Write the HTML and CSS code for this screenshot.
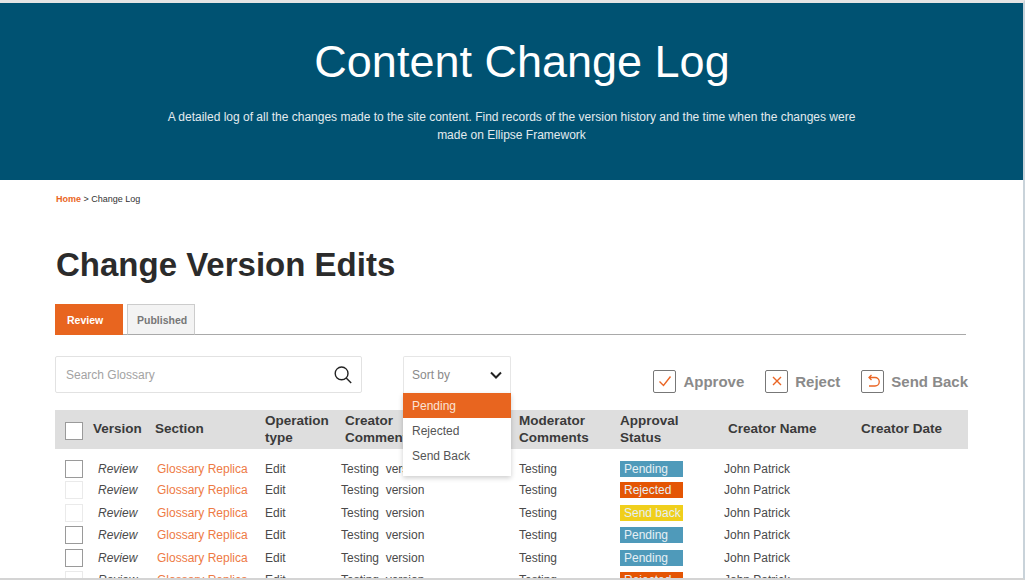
FILE: index.html
```html
<!DOCTYPE html>
<html lang="en">
<head>
    <meta charset="UTF-8">
    <meta name="viewport" content="width=device-width, initial-scale=1.0">
    <title>Content Change Log</title>
    <link rel="stylesheet" href="styles.css">
</head>
<body>
    <div class="page">
        <!-- Banner -->
        <header class="banner">
            <h1>Content Change Log</h1>
            <p>A detailed log of all the changes made to the site content. Find records of the version history and the time when the changes were made on Ellipse Framework</p>
        </header>

        <div class="container">
            <p class="crumbs"><a href="#">Home</a> &gt; Change Log</p>
            <h2>Change Version Edits</h2>

            <div class="tabs">
                <a class="tab active" href="#">Review</a>
                <a class="tab" href="#">Published</a>
            </div>

            <!-- Search, sort and bulk actions -->
            <div class="toolbar">
                <div class="search">
                    <span>Search Glossary</span>
                    <svg width="20" height="20" viewBox="0 0 20 20" fill="none" stroke="#222" stroke-width="1.4"><circle cx="8.6" cy="8.4" r="6.4"/><path d="M13.2 13l5 5"/></svg>
                </div>
                <div class="sort">
                    <div class="sort-head">
                        <span>Sort by</span>
                        <svg width="12" height="8" viewBox="0 0 12 8" fill="none" stroke="#222" stroke-width="2"><path d="M1 1.5l5 5 5-5"/></svg>
                    </div>
                    <ul class="sort-menu">
                        <li class="selected">Pending</li>
                        <li>Rejected</li>
                        <li>Send Back</li>
                    </ul>
                </div>
                <div class="actions">
                    <a class="action" href="#">
                        <span class="action-box"><svg width="14" height="12" viewBox="0 0 14 12" fill="none" stroke="#ea6524" stroke-width="1.4"><path d="M1.5 6.5l4 4 7-9"/></svg></span>
                        Approve
                    </a>
                    <a class="action" href="#">
                        <span class="action-box"><svg width="10" height="10" viewBox="0 0 10 10" fill="none" stroke="#ea6524" stroke-width="1.4"><path d="M1 1l8 8M9 1l-8 8"/></svg></span>
                        Reject
                    </a>
                    <a class="action" href="#">
                        <span class="action-box"><svg width="14" height="14" viewBox="0 0 14 14" fill="none" stroke="#ea6524" stroke-width="1.3"><path d="M3 3.5h6a3.8 3.8 0 0 1 0 8.500H3M5.500 1L3 3.500 5.500 6"/></svg></span>
                        Send Back
                    </a>
                </div>
            </div>

            <table class="log">
                <colgroup>
                    <col class="c-check"><col class="c-version"><col class="c-section"><col class="c-op"><col class="c-creator"><col class="c-mod"><col class="c-status"><col class="c-name"><col class="c-date">
                </colgroup>
                <thead>
                    <tr>
                        <th><span class="box dark big"></span></th>
                        <th>Version</th>
                        <th>Section</th>
                        <th>Operation type</th>
                        <th class="push">Creator<br>Comments</th>
                        <th>Moderator Comments</th>
                        <th>Approval<br>Status</th>
                        <th class="push">Creator Name</th>
                        <th class="push">Creator Date</th>
                    </tr>
                </thead>
                <tbody>
                    <tr>
                        <td><span class="box dark"></span></td>
                        <td><i>Review</i></td>
                        <td><a href="#">Glossary Replica</a></td>
                        <td>Edit</td>
                        <td>Testing&nbsp; version</td>
                        <td>Testing</td>
                        <td><span class="badge pending">Pending</span></td>
                        <td>John Patrick</td>
                        <td></td>
                    </tr>
                    <tr>
                        <td><span class="box"></span></td>
                        <td><i>Review</i></td>
                        <td><a href="#">Glossary Replica</a></td>
                        <td>Edit</td>
                        <td>Testing&nbsp; version</td>
                        <td>Testing</td>
                        <td><span class="badge rejected">Rejected</span></td>
                        <td>John Patrick</td>
                        <td></td>
                    </tr>
                    <tr>
                        <td><span class="box"></span></td>
                        <td><i>Review</i></td>
                        <td><a href="#">Glossary Replica</a></td>
                        <td>Edit</td>
                        <td>Testing&nbsp; version</td>
                        <td>Testing</td>
                        <td><span class="badge sendback">Send back</span></td>
                        <td>John Patrick</td>
                        <td></td>
                    </tr>
                    <tr>
                        <td><span class="box dark"></span></td>
                        <td><i>Review</i></td>
                        <td><a href="#">Glossary Replica</a></td>
                        <td>Edit</td>
                        <td>Testing&nbsp; version</td>
                        <td>Testing</td>
                        <td><span class="badge pending">Pending</span></td>
                        <td>John Patrick</td>
                        <td></td>
                    </tr>
                    <tr>
                        <td><span class="box dark"></span></td>
                        <td><i>Review</i></td>
                        <td><a href="#">Glossary Replica</a></td>
                        <td>Edit</td>
                        <td>Testing&nbsp; version</td>
                        <td>Testing</td>
                        <td><span class="badge pending">Pending</span></td>
                        <td>John Patrick</td>
                        <td></td>
                    </tr>
                    <tr>
                        <td><span class="box"></span></td>
                        <td><i>Review</i></td>
                        <td><a href="#">Glossary Replica</a></td>
                        <td>Edit</td>
                        <td>Testing&nbsp; version</td>
                        <td>Testing</td>
                        <td><span class="badge rejected">Rejected</span></td>
                        <td>John Patrick</td>
                        <td></td>
                    </tr>
                </tbody>
            </table>
        </div>
    </div>
</body>
</html>
```

FILE: styles.css
```css
* {
    margin: 0;
    padding: 0;
    box-sizing: border-box;
    font-family: 'Liberation Sans', Arial, sans-serif;
}

html, body {
    height: 100%;
    overflow: hidden;
    background-color: #fff;
}

.page {
    width: 1025px;
    height: 580px;
    overflow: hidden;
    border-top: 3px solid #e4e4e4;
    border-right: 2px solid #c9d3da;
    border-bottom: 2px solid #d4d4d4;
}

.banner {
    height: 177px;
    padding-top: 32px;
    background-color: #005272;
    color: #fff;
    text-align: center;
}

.banner h1 {
    padding-left: 21px;
    font-size: 45px;
    font-weight: 400;
    line-height: 54px;
}

.banner p {
    width: 700px;
    margin: 19px auto 0;
    font-size: 12px;
    line-height: 18px;
    color: #e3ebef;
}

.container {
    padding: 0 57px 0 55px;
}

.crumbs {
    padding: 14px 0 0 1px;
    font-size: 9px;
    line-height: 11px;
    color: #333;
}

.crumbs a {
    color: #ea6524;
    font-weight: 700;
    text-decoration: none;
}

h2 {
    margin-top: 40px;
    padding-left: 1px;
    font-size: 33px;
    line-height: 40px;
    color: #2b2b2b;
}

.tabs {
    display: flex;
    gap: 4px;
    margin-top: 19px;
    height: 31px;
    border-bottom: 1px solid #a9a9a9;
}

.tab {
    display: flex;
    align-items: center;
    width: 68px;
    height: 31px;
    padding: 0 9px;
    font-size: 10.5px;
    font-weight: 700;
    text-decoration: none;
    color: #777;
    background-color: #f3f3f3;
    border: 1px solid #ccc;
    border-bottom: 1px solid #a9a9a9;
}

.tab.active {
    padding: 0 11px;
    color: #fff;
    background-color: #e8651f;
    border-color: #e8651f;
}

.toolbar {
    display: flex;
    margin-top: 21px;
    height: 54px;
    position: relative;
    z-index: 2;
}

.search {
    display: flex;
    align-items: center;
    justify-content: space-between;
    width: 307px;
    height: 37px;
    padding: 0 8px 0 10px;
    border: 1px solid #e2e2e2;
    border-radius: 2px;
    font-size: 12px;
    color: #a3a3a3;
}

.sort {
    position: relative;
    width: 108px;
    margin-left: 41px;
}

.sort-head {
    display: flex;
    align-items: center;
    justify-content: space-between;
    height: 37px;
    padding: 0 8px;
    border: 1px solid #e6e6e6;
    border-bottom: 0;
    border-radius: 2px 2px 0 0;
    font-size: 12px;
    color: #8a8a8a;
}

.sort-menu {
    position: absolute;
    top: 37px;
    left: 0;
    right: 0;
    height: 83px;
    list-style: none;
    background-color: #fff;
    box-shadow: 0 2px 5px rgba(0, 0, 0, 0.2);
}

.sort-menu li {
    height: 25px;
    padding: 0 9px;
    font-size: 12px;
    line-height: 26px;
    color: #555;
}

.sort-menu .selected {
    color: #fbe3d5;
    background-color: #e8651f;
}

.actions {
    display: flex;
    gap: 21px;
    margin-left: auto;
    margin-right: -2px;
    padding-top: 13px;
}

.action {
    display: flex;
    align-items: center;
    gap: 7px;
    height: 24px;
    font-size: 15px;
    font-weight: 700;
    text-decoration: none;
    color: #8a8a8a;
}

.action-box {
    display: flex;
    align-items: center;
    justify-content: center;
    width: 23px;
    height: 23px;
    border: 1px solid #777;
    border-radius: 2px;
}

.log {
    width: 913px;
    table-layout: fixed;
    border-collapse: collapse;
    font-size: 12px;
    color: #4a4a4a;
}

.c-check { width: 38px; }
.c-version { width: 62px; }
.c-section { width: 110px; }
.c-op { width: 76px; }
.c-creator { width: 178px; }
.c-mod { width: 101px; }
.c-status { width: 104px; }
.c-name { width: 133px; }
.c-date { width: 111px; }

.log thead tr {
    height: 39px;
    background-color: #dedede;
}

.log th {
    padding-bottom: 2px;
    font-size: 13.5px;
    line-height: 17px;
    text-align: left;
    color: #3a3a3a;
}

.log th:first-child {
    padding: 2px 0 0;
}

.log th.push {
    padding-left: 4px;
    white-space: nowrap;
}

.log tbody tr {
    height: 22.5px;
}

.log tbody tr:first-child {
    height: 30px;
}

.log tbody tr:first-child td {
    padding-top: 9px;
}

.log td {
    white-space: nowrap;
    vertical-align: middle;
}

.log td i {
    display: inline-block;
    padding-left: 5px;
}

.log td a {
    padding-left: 2px;
    color: #ee7a45;
    text-decoration: none;
}

.box {
    display: block;
    width: 18px;
    height: 18px;
    margin-left: 10px;
    background-color: #fff;
    border: 1px solid #eaeaea;
}

.box.dark {
    border-color: #9a9a9a;
}

.badge {
    display: block;
    width: 63px;
    height: 16px;
    padding-left: 4px;
    font-size: 12px;
    line-height: 16px;
    color: #e6f0f5;
    white-space: nowrap;
}

.pending { background-color: #4f9aba; }
.rejected { background-color: #e45504; }
.sendback { background-color: #f0cf1c; }
```
